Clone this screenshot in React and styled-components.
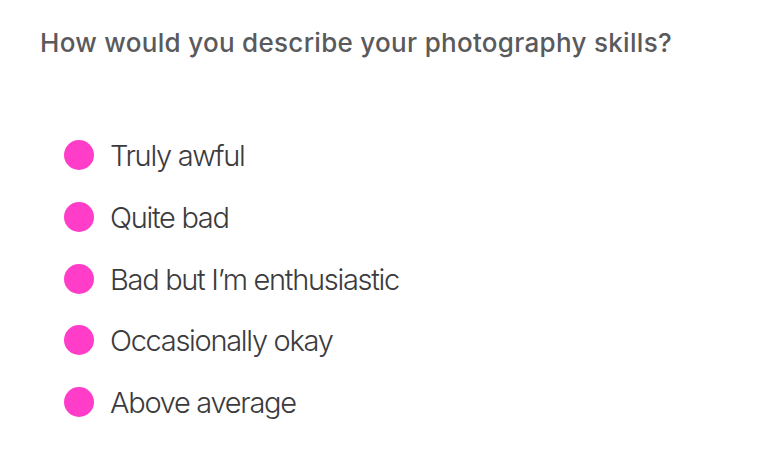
import styled, { createGlobalStyle } from "styled-components";

const GlobalStyle = createGlobalStyle`
  html, body {
    margin: 0;
    background: #ffffff;
  }
  body {
    font-family: "Inter", "Noto Sans", sans-serif;
  }
`;

const Page = styled.div`
  width: 770px;
  height: 459px;
  padding: 25px 40px 0;
  box-sizing: border-box;
`;

const Question = styled.h2`
  margin: 0;
  font-size: 26px;
  font-weight: 500;
  line-height: 36px;
  color: #5a5a5c;
  letter-spacing: 0.3px;
`;

const Options = styled.ul`
  list-style: none;
  margin: 0;
  padding: 74px 0 0 24px;
  display: flex;
  flex-direction: column;
  gap: 21.8px;
`;

const Option = styled.li`
  display: flex;
  align-items: center;
  gap: 16px;
  height: 40px;
`;

const Dot = styled.span`
  width: 30px;
  height: 30px;
  border-radius: 50%;
  background: #ff3dc8;
  flex-shrink: 0;
`;

const Label = styled.span`
  font-size: 29px;
  font-weight: 300;
  color: #3b3b3d;
  letter-spacing: -1.3px;
  line-height: 40px;
  padding-top: 2px;
`;

const answers = [
  "Truly awful",
  "Quite bad",
  "Bad but I’m enthusiastic",
  "Occasionally okay",
  "Above average",
];

const App = () => {
  return (
    <>
      <GlobalStyle />
      <Page>
        <Question>How would you describe your photography skills?</Question>
        <Options>
          {answers.map((answer) => (
            <Option key={answer}>
              <Dot />
              <Label>{answer}</Label>
            </Option>
          ))}
        </Options>
      </Page>
    </>
  );
};

export default App;
